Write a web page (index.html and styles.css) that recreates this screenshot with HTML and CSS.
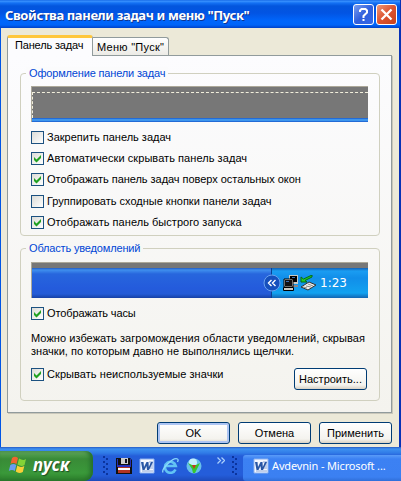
FILE: index.html
```html
<!DOCTYPE html>
<html lang="ru">
<head>
<meta charset="utf-8">
<title>Свойства панели задач и меню "Пуск"</title>
<link rel="stylesheet" href="styles.css">
</head>
<body>
<svg class="defs" width="0" height="0">
  <symbol id="tick" viewBox="0 0 13 13"><path d="M3 5v3l2.500 2.500L10 6V3L5.500 7.500z" fill="#21a121"/></symbol>
  <symbol id="word" viewBox="0 0 16 16">
    <path d="M1 1h14v14H1z" fill="#f4f7ff" stroke="#8db2ee"/>
    <path d="M10 4h4M11 6h3M11 8h3M10 10h4M3 13h11" stroke="#8ba6d6"/>
    <path d="M2 4h2.500l.5 5 2.500-5h2l.3 5L12 4h2l-4 8H8l-.5-4-2 4h-2z" fill="#2856a5"/>
  </symbol>
</svg>
<div class="window">
  <header class="titlebar">
    <h1><span class="t-title">Свойства панели задач и меню "Пуск"</span></h1>
    <div class="caption-btn help"><svg width="19" height="19" viewBox="0 0 19 19"><path d="M6 7V5.500L7.500 4h4L13 5.500v2L9.500 11v2M9.500 14v2" fill="none" stroke="#fff" stroke-width="2"/></svg></div>
    <div class="caption-btn close"><svg width="19" height="19" viewBox="0 0 19 19"><path d="M4.500 4.500l10 10M14.500 4.500l-10 10" stroke="#fff" stroke-width="2.300"/></svg></div>
  </header>
  <main class="client">
    <nav class="tabs">
      <div class="tab active"><span class="t-tab1">Панель задач</span></div>
      <div class="tab"><span class="t-tab2">Меню "Пуск"</span></div>
    </nav>
    <section class="page">
      <div class="group look">
        <div class="legend"><span class="t-leg1">Оформление панели задач</span></div>
        <div class="preview hidden-bar"><div class="outline"></div><div class="edge"></div></div>
        <div class="checks">
          <label><i class="box"></i><span class="t-c1">Закрепить панель задач</span></label>
          <label><i class="box"><svg><use href="#tick"/></svg></i><span class="t-c2">Автоматически скрывать панель задач</span></label>
          <label><i class="box"><svg><use href="#tick"/></svg></i><span class="t-c3">Отображать панель задач поверх остальных окон</span></label>
          <label class="lower"><i class="box"></i><span class="t-c4">Группировать сходные кнопки панели задач</span></label>
          <label><i class="box"><svg><use href="#tick"/></svg></i><span class="t-c5">Отображать панель быстрого запуска</span></label>
        </div>
      </div>
      <div class="group notify">
        <div class="legend"><span class="t-leg2">Область уведомлений</span></div>
        <div class="preview tray-preview">
          <div class="bar">
            <div class="tray">
              <svg class="chevron" width="18" height="18" viewBox="0 0 18 18"><circle cx="9" cy="9" r="8" fill="#1650bd" stroke="#6ba2ee"/><path d="M8.500 6l-3 3 3 3M12.500 6l-3 3 3 3" fill="none" stroke="#fff" stroke-width="1.400"/></svg>
              <svg class="net" width="16" height="16" viewBox="0 0 16 16"><path d="M6 0h9v9H6z" fill="#c8c8c0"/><path d="M7 1h7v6H7z" fill="#000"/><path d="M8 10h7v2H8z" fill="#888"/><path d="M1 4h9v8H1z" fill="#deded6" stroke="#000"/><path d="M2 5h7v6H2z" fill="#111"/><path d="M3 6h3v1H3zM9 2h3v1H9z" fill="#3c6bb0"/><path d="M.5 12.500h10v3H.5z" fill="#c8c8c0" stroke="#000"/></svg>
              <svg class="device" width="17" height="16" viewBox="0 0 17 16"><path d="M1 12l8-5 7 3-8 5z" fill="#eee" stroke="#333"/><path d="M3 12l4 1M6 11l5 1M8 9l5 2" stroke="#8b8b8b"/><path d="M1 2v5h6L5 5.500 12 2V0L3.500 4z" fill="#20cc26" stroke="#086b17"/></svg>
              <span class="t-clock">1:23</span>
            </div>
          </div>
        </div>
        <label class="clock-check"><i class="box"><svg><use href="#tick"/></svg></i><span class="t-c6">Отображать часы</span></label>
        <p><span class="t-p1">Можно избежать загромождения области уведомлений, скрывая</span><br><span class="t-p2">значки, по которым давно не выполнялись щелчки.</span></p>
        <div class="hide-row">
          <label><i class="box"><svg><use href="#tick"/></svg></i><span class="t-c7">Скрывать неиспользуемые значки</span></label>
          <div class="button"><span class="t-b1">Настроить...</span></div>
        </div>
      </div>
    </section>
    <footer class="actions">
      <div class="button default"><span class="t-ok">OK</span></div>
      <div class="button"><span class="t-b2">Отмена</span></div>
      <div class="button"><span class="t-b3">Применить</span></div>
    </footer>
  </main>
</div>
<div class="taskbar">
  <div class="start">
    <svg width="20" height="18" viewBox="0 0 20 18"><path d="M4 2Q7-.5 10 2L8.500 8Q5 6 2.500 8z" fill="#f0642f"/><path d="M11 2.500q4 2.500 7 .5l-1.500 6q-3 2-7-.5z" fill="#84d337"/><path d="M2.300 9q3-2 6 0L6.800 15Q4 13 .8 15z" fill="#6a9cf2"/><path d="M9.300 9.500q3 2.500 7 .5l-1.500 6q-4 2-7-.5z" fill="#f9cf38"/></svg>
    <span class="t-start">пуск</span>
  </div>
  <div class="grip g1"></div>
  <div class="quick">
    <svg width="16" height="16" viewBox="0 0 16 16"><path d="M0 0h14l2 2v14H0z" fill="#111"/><path d="M1 1h1v6h12V1h1v8H1z" fill="#2430bb"/><path d="M5 0h7v6H5z" fill="#ccc"/><path d="M9 1h2v4H9z" fill="#112"/><path d="M2 9h12v6H2z" fill="#fff"/><path d="M2 9h12v1H2zM2 12h12v3H2z" fill="#b33423"/></svg>
    <svg width="16" height="16"><use href="#word"/></svg>
    <svg width="17" height="16" viewBox="0 0 17 16"><path d="M13.500 11.500A5.500 5.500 0 1 1 13.800 8H4" fill="none" stroke="#62c3f4" stroke-width="2.600"/><path d="M1 14.500C-1 11 11-1 15.500 1c1 .5.500 2 0 3" fill="none" stroke="#8ad8fa" stroke-width="1.300"/></svg>
    <svg width="16" height="16" viewBox="0 0 16 16"><circle cx="8" cy="8" r="7.500" fill="#67bfea"/><circle cx="7" cy="4.500" r="4" fill="#c4efff"/><path d="M2 5l4 2h4l4-2-3 6-2 4H7L6 11z" fill="#36c72e"/><path d="M6 7h4l-2 4z" fill="#c63820"/></svg>
  </div>
  <svg class="more" width="8" height="7" viewBox="0 0 8 7"><path d="M.5.5l3 3-3 3M4.500.5l3 3-3 3" fill="none" stroke="#a9cffc" stroke-width="1.300"/></svg>
  <div class="grip g2"></div>
  <div class="task"><svg width="16" height="16"><use href="#word"/></svg><span class="t-task">Avdevnin - Microsoft ...</span></div>
</div>
</body>
</html>
```
FILE: styles.css
```css
* { box-sizing: border-box; }
body {
  margin: 0;
  width: 401px;
  height: 481px;
  overflow: hidden;
  font: 11px/13px "Liberation Sans", sans-serif;
  color: #000;
}
svg { display: block; flex: none; }
span { white-space: nowrap; }
.defs { position: absolute; }
.window { height: 447px; border-left: 1px solid #0055e5; border-right: 2px solid #0831b5; background: #ece9d8; }
.titlebar {
  display: flex;
  height: 28px;
  margin: 0 -1px;
  padding: 4px 3px 0 5px;
  background: linear-gradient(#0a5ce0 0, #3c94ff 1px, #1471f4 3px, #0355dd 6px, #0254e3 13px, #0066fc 21px, #0064f8 25px, #0041c8 28px);
}
h1 { flex: 1; margin: 0; font: bold 13px/23px "Noto Sans", sans-serif; letter-spacing: -0.38px; color: #fff; text-shadow: 1px 1px #10358f; }
.caption-btn { width: 21px; height: 21px; margin-left: 2px; border: 1px solid #fff; border-radius: 3px; }
.help { background: linear-gradient(135deg, #7b9ef0, #3160dc 50%, #3468e8); }
.close { background: linear-gradient(135deg, #ee9876, #dc5330 50%, #c7431c); }
.client { padding: 7px 7px 0 6px; }
.tabs { display: flex; align-items: flex-end; height: 20px; }
.tab { width: 76px; height: 18px; padding: 2px 0 0 4px; border: 1px solid #919b9c; border-left: 0; border-bottom: 0; border-radius: 0 3px 0 0; background: linear-gradient(#fff, #ecebe6); line-height: 14px; }
.tab.active { width: 86px; height: 21px; margin-bottom: -1px; padding: 0 0 0 7px; border-left: 1px solid #919b9c; border-top: 3px solid #ffc73c; border-radius: 3px 3px 0 0; background: #fcfcfe; z-index: 1; box-shadow: inset 0 1px #fffdf4; }
.page { height: 358px; padding: 17px 11px 0 12px; border: 1px solid #919b9c; background: linear-gradient(#fcfcfe, #f4f3ee); box-shadow: 1px 1px #c9c7ba; }
.group { border: 1px solid #d0d0bf; border-radius: 4px; padding: 0 10px; }
.look { height: 163px; }
.notify { height: 153px; margin-top: 12px; }
.legend { width: max-content; height: 13px; margin: -7px 0 0 -5px; padding: 0 3px; background: #fbfbfc; color: #0046d5; }
.notify .legend { background: #f7f7f5; }
.preview { width: 337px; height: 36px; border-top: 1px solid #aca899; border-left: 1px solid #aca899; background: #777; }
.hidden-bar { margin-top: 6px; padding-top: 5px; }
.outline { height: 26px; border-top: 1px dashed #f2efdc; border-left: 1px dashed #f2efdc; }
.edge { height: 4px; background: linear-gradient(#236bd6 1px, #3d95ed 1px 3px, #236bd6 3px); }
.checks { margin-top: 9px; }
label { display: flex; gap: 3px; height: 13px; margin-bottom: 8px; }
label.lower { margin-top: 9px; }
.box { width: 13px; height: 13px; border: 1px solid #1c5180; background: linear-gradient(135deg, #dcdcd7, #fff); }
.box svg { width: 13px; height: 13px; margin: -1px; }
.tray-preview { margin-top: 7px; padding-top: 5px; }
.bar { display: flex; justify-content: flex-end; height: 30px; background: linear-gradient(#245bc0 0, #3f8fee 2px, #2766dd 6px, #245bdc 20px, #235bd6 26px, #1641a5 30px); }
.tray { display: flex; align-items: center; width: 97px; border-left: 1px solid #0a4191; background: linear-gradient(#1360b5 0, #1a9df2 3px, #118ee9 10px, #12a2f0 25px, #1265b2 30px); color: #fff; }
.chevron { margin-left: -9px; }
.net { margin-left: 2px; }
.device { margin-left: 1px; }
.t-clock { margin-left: 3px; font: 12px "DejaVu Sans"; }
.clock-check { margin: 9px 0 0; }
p { margin: 12px 0 0; line-height: 13px; height: 26px; }
.hide-row { display: flex; justify-content: space-between; margin: 10px 2px 0 0; }
.button { display: flex; align-items: center; justify-content: center; width: 73px; height: 22px; border: 1px solid #003c74; border-radius: 3px; background: linear-gradient(#fff, #f4f3ee 80%, #d8d1c4); }
.default { box-shadow: inset 0 0 0 2px #adc5f3; }
.actions { display: flex; justify-content: flex-end; gap: 8px; margin-top: 9px; }
.taskbar { display: flex; height: 34px; padding-top: 4px; background: linear-gradient(#285cc5 0, #3d91f0 2px, #307be7 6px, #245dd9 9px, #245dda 28px, #1d4aba 34px); }
.start { display: flex; width: 93px; height: 30px; padding: 5px 0 0 8px; border-radius: 0 7px 9px 0; background: linear-gradient(#6fae69 0, #4d9a49 4px, #398b37 8px, #3a993a 22px, #2b7c2a 30px); box-shadow: inset -3px 0 4px #26702c; }
.t-start { margin-left: 5px; font: italic bold 17px/18px "Noto Sans", sans-serif; letter-spacing: 0.4px; color: #fff; text-shadow: 1px 1px 1px #1e4e23; }
.grip { width: 5px; height: 20px; margin-top: 5px; background: radial-gradient(circle at 1px 1px, #0b349d 1px, transparent 1.3px) 0 0 / 5px 5px, radial-gradient(circle at 4px 3px, #0b349d 1px, transparent 1.3px) 0 0 / 5px 5px; }
.g1 { margin-left: 10px; }
.quick { display: flex; gap: 7px; margin: 7px 0 0 8px; }
.more { margin: 6px 0 0 15px; }
.g2 { margin-left: 7px; }
.task { display: flex; flex: 1; height: 26px; margin: 4px 0 0 6px; padding: 3px 0 0 10px; border-radius: 3px 0 0 3px; background: linear-gradient(#5a9bf8, #3c81f3 4px, #3b80f2 22px, #306fd9); color: #fff; }
.t-task { margin-left: 3px; font: 11px/16px "Noto Sans", sans-serif; letter-spacing: -0.15px; }
.t-tab1, .t-leg1, .t-leg2 { letter-spacing: -0.16px; }
.t-tab2 { letter-spacing: 0.28px; }
.t-c2, .t-c7 { letter-spacing: 0.06px; }
.t-c3 { letter-spacing: -0.04px; }
.t-c5 { letter-spacing: 0.04px; }
.t-c6 { letter-spacing: -0.12px; }
.t-p1 { letter-spacing: 0.055px; }
.t-p2 { letter-spacing: 0.03px; }
```
